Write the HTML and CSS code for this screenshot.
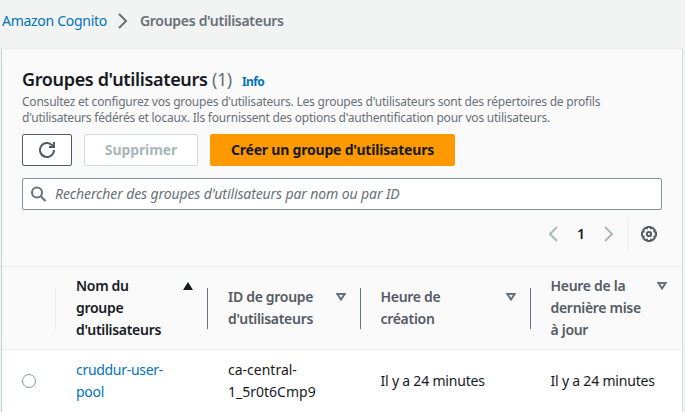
FILE: index.html
```html
<!DOCTYPE html>
<html lang="fr">
<head>
<meta charset="utf-8">
<title>Amazon Cognito</title>
<link rel="stylesheet" href="styles.css">
</head>
<body>
<nav class="crumbs">
  <a class="crumb-link">Amazon Cognito</a>
  <svg class="crumb-sep" width="10" height="16" viewBox="0 0 10 16"><path d="M1 1l7 7-7 7"/></svg>
  <span class="crumb-current">Groupes d'utilisateurs</span>
</nav>
<main class="card">
  <header class="head">
    <div class="title-row">
      <h1 class="title">Groupes d'utilisateurs</h1>
      <span class="count">(1)</span>
      <a class="info">Info</a>
    </div>
    <p class="desc">Consultez et configurez vos groupes d'utilisateurs. Les groupes d'utilisateurs sont des répertoires de profils<br>d'utilisateurs fédérés et locaux. Ils fournissent des options d'authentification pour vos utilisateurs.</p>
    <div class="actions">
      <button class="btn refresh"><svg width="16" height="16" viewBox="0 0 16 16"><path d="M15 8a7 7 0 1 1-2.2-5.1L15 5M10 5h5V0"/></svg></button>
      <button class="btn disabled"><span>Supprimer</span></button>
      <button class="btn primary"><span>Créer un groupe d'utilisateurs</span></button>
    </div>
    <div class="search">
      <svg width="16" height="16" viewBox="0 0 16 16"><circle cx="6" cy="6.500" r="5"/><path d="M9.700 10.200L14.500 15"/></svg>
      <span class="placeholder">Rechercher des groupes d'utilisateurs par nom ou par ID</span>
    </div>
    <div class="tools">
      <svg class="arrow" width="10" height="16" viewBox="0 0 10 16"><path d="M9 1L2 8l7 7"/></svg>
      <span class="page">1</span>
      <svg class="arrow" width="10" height="16" viewBox="0 0 10 16"><path d="M1 1l7 7-7 7"/></svg>
      <span class="rule"></span>
      <svg class="gear" width="16" height="16" viewBox="0 0 16 16"><path d="M6.5 1h3l.6 1.3 1.5-.5 2.2 2.2-.5 1.5 1.7.9v3.200l-1.700.900.5 1.500-2.200 2.200-1.500-.5-.6 1.300h-3l-.6-1.300-1.500.5L2.200 12l.5-1.500L1 9.600V6.400l1.700-.9L2.200 4l2.200-2.200 1.500.5z"/><circle cx="8" cy="8" r="2.100"/></svg>
    </div>
  </header>
  <section class="grid thead">
    <div class="cell pick"></div>
    <div class="cell sorted tall"><span>Nom du<br>groupe<br>d'utilisateurs</span><svg width="10" height="8" viewBox="0 0 10 8"><path class="solid" d="M5 0l5 8H0z"/></svg></div>
    <div class="cell"><span>ID de groupe<br>d'utilisateurs</span><svg width="10" height="8" viewBox="0 0 10 8"><path d="M1.300 1h7.400L5 6.500z"/></svg></div>
    <div class="cell"><span>Heure de<br>création</span><svg width="10" height="8" viewBox="0 0 10 8"><path d="M1.300 1h7.400L5 6.500z"/></svg></div>
    <div class="cell tall"><span>Heure de la<br>dernière mise<br>à jour</span><svg width="10" height="8" viewBox="0 0 10 8"><path d="M1.300 1h7.400L5 6.500z"/></svg></div>
  </section>
  <section class="grid trow">
    <div class="cell pick"><span class="radio"></span></div>
    <div class="cell"><a class="pool">cruddur-user-<br>pool</a></div>
    <div class="cell"><span class="id">ca-central-<br>1_5r0t6Cmp9</span></div>
    <div class="cell"><span class="time">Il y a 24 minutes</span></div>
    <div class="cell"><span class="time">Il y a 24 minutes</span></div>
  </section>
</main>
</body>
</html>
```
FILE: styles.css
```css
* { box-sizing: border-box; }
body {
  margin: 0;
  height: 412px;
  overflow: hidden;
  background: #f2f3f3;
  color: #16191f;
  font: 14px/22px "Noto Sans", "Open Sans", sans-serif;
}
svg { display: block; flex: none; fill: none; stroke: #545b64; stroke-width: 2; }
a { color: #0073bb; }
.crumbs { display: flex; align-items: center; height: 48px; padding: 0 0 6px 2px; white-space: nowrap; }
.crumb-link { width: 105px; letter-spacing: -.28px; }
.crumb-sep { margin: 0 12px 0 11px; stroke: #687078; }
.crumb-current { color: #687078; font-weight: 600; letter-spacing: -.3px; }
.card {
  width: 682px;
  height: 380px;
  margin-left: 1px;
  background: #fff;
  border: 1px solid #d5dbdb;
  border-top-color: #eaeded;
  border-left-color: #c7cecf;
}
.head { height: 218px; padding: 19px 20px 0; background: #fafafa; border-bottom: 1px solid #eaeded; }
.title-row { display: flex; align-items: baseline; height: 26px; white-space: nowrap; }
.title { width: 185px; margin: 0; font-size: 18px; line-height: 22px; font-weight: 600; letter-spacing: -.35px; }
.count { width: 22px; margin-left: 5px; color: #687078; font-size: 18px; letter-spacing: -.5px; }
.info { margin-left: 8px; font-size: 12px; font-weight: 700; letter-spacing: -.6px; }
.desc { margin: 0; height: 40px; color: #687078; font-size: 12px; line-height: 16px; letter-spacing: -.22px; white-space: nowrap; }
.actions { display: flex; gap: 12px; }
.btn {
  display: flex;
  align-items: center;
  justify-content: center;
  height: 32px;
  padding: 0;
  border: 1px solid #545b64;
  border-radius: 2px;
  background: #fff;
  font: 700 14px/22px "Noto Sans", sans-serif;
  white-space: nowrap;
}
.refresh { width: 50px; }
.disabled { width: 114px; color: #aab7b8; border-color: #d5dbdb; letter-spacing: -.1px; }
.primary { width: 245px; color: #16191f; background: #ff9900; border-color: #ff9900; letter-spacing: -.2px; }
.search {
  display: flex;
  align-items: center;
  height: 32px;
  margin-top: 12px;
  padding-left: 8px;
  background: #fff;
  border: 1px solid #879596;
  border-radius: 2px;
}
.search svg { stroke: #687078; }
.placeholder { margin-left: 8px; color: #687078; font-style: italic; letter-spacing: -.11px; white-space: nowrap; }
.tools { display: flex; align-items: center; height: 32px; margin-top: 8px; padding-right: 5px; justify-content: flex-end; }
.arrow { stroke: #aab7b8; }
.page { width: 46px; text-align: center; font-weight: 600; }
.rule { width: 1px; height: 32px; margin: 0 13px; background: #eaeded; }
.grid { display: grid; grid-template-columns: 54px 152px 153px 170px 151px; }
.thead { height: 83px; background: #fafafa; border-bottom: 1px solid #eaeded; color: #545b64; font-weight: 600; }
.cell { display: flex; align-items: center; padding-left: 20px; white-space: nowrap; }
.cell:nth-child(n+4) { padding-left: 19.5px; }
.thead .cell { position: relative; justify-content: space-between; padding-right: 15px; letter-spacing: -.3px; }
.thead .cell:not(:last-child)::after { content: ""; position: absolute; right: 0; top: 21px; width: 1px; height: 41px; background: #687078; }
.thead .cell.pick::after { background: #eaeded; }
.thead svg { align-self: flex-start; margin-top: 26px; stroke: #687078; }
.thead .tall svg { margin-top: 15px; }
.thead .sorted { color: #16191f; }
.thead .solid { fill: #16191f; stroke: none; }
.trow { height: 62px; }
.pool { letter-spacing: -.3px; }
.time { letter-spacing: -.2px; }
.radio { width: 14px; height: 14px; border: 1px solid #879596; border-radius: 50%; }
```
